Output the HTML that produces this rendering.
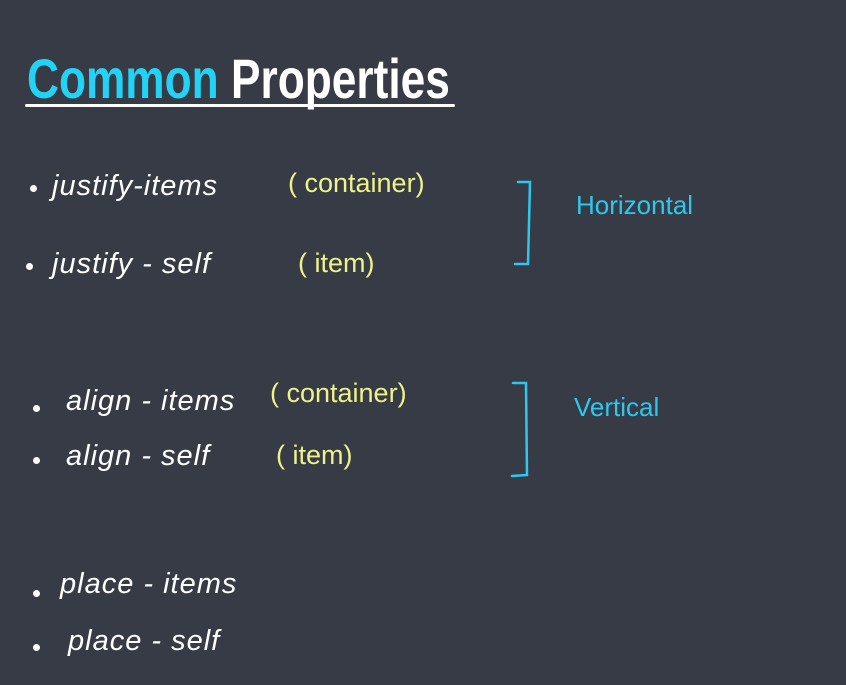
<!DOCTYPE html><html><head><style>
body{margin:0;width:846px;height:685px;background:#363b46;overflow:hidden;position:relative;font-family:"Liberation Sans",sans-serif}
.t{position:absolute;left:27px;top:46px;font-family:"Liberation Sans Narrow","Liberation Sans",sans-serif;font-weight:bold;font-size:56px;letter-spacing:0px;transform:scaleX(0.79);transform-origin:left;white-space:nowrap}
.u{position:absolute;left:25px;top:104px;width:430px;height:3px;background:#fff;border-radius:2px}
.w{position:absolute;color:#fff;font-size:29px;font-style:italic;font-weight:300;white-space:nowrap;letter-spacing:1px}
.y{position:absolute;color:#eef28a;font-size:27px;white-space:nowrap}
.b{position:absolute;color:#2ec8ee;font-size:26px;white-space:nowrap}
.d{position:absolute;width:7px;height:7px;border-radius:50%;background:#fff}
</style></head><body>
<div class="t"><span style="color:#22d3f5">Common</span> <span style="color:#fff">Properties</span></div>
<div class="u"></div>
<div class="d" style="left:30px;top:185px"></div><div class="w" style="left:52px;top:170px">justify-items</div>
<div class="y" style="left:288px;top:168px">( container)</div>
<div class="d" style="left:26px;top:263px"></div><div class="w" style="left:52px;top:248px">justify - self</div>
<div class="y" style="left:298px;top:248px">( item)</div>
<div class="d" style="left:33px;top:405px"></div><div class="w" style="left:66px;top:385px">align - items</div>
<div class="y" style="left:270px;top:378px">( container)</div>
<div class="d" style="left:33px;top:457px"></div><div class="w" style="left:66px;top:440px">align - self</div>
<div class="y" style="left:276px;top:440px">( item)</div>
<div class="d" style="left:33px;top:590px"></div><div class="w" style="left:60px;top:568px">place - items</div>
<div class="d" style="left:33px;top:644px"></div><div class="w" style="left:68px;top:625px">place - self</div>
<div class="b" style="left:576px;top:190px">Horizontal</div>
<div class="b" style="left:574px;top:392px">Vertical</div>
<svg width="846" height="685" style="position:absolute;left:0;top:0" fill="none" stroke="#2ec8ee" stroke-width="2.5" stroke-linecap="round">
<path d="M518 182 L530 182 L528 264 L515 264"/>
<path d="M513 383 L526 383 L527 475 L512 476"/>
</svg>
</body></html>
